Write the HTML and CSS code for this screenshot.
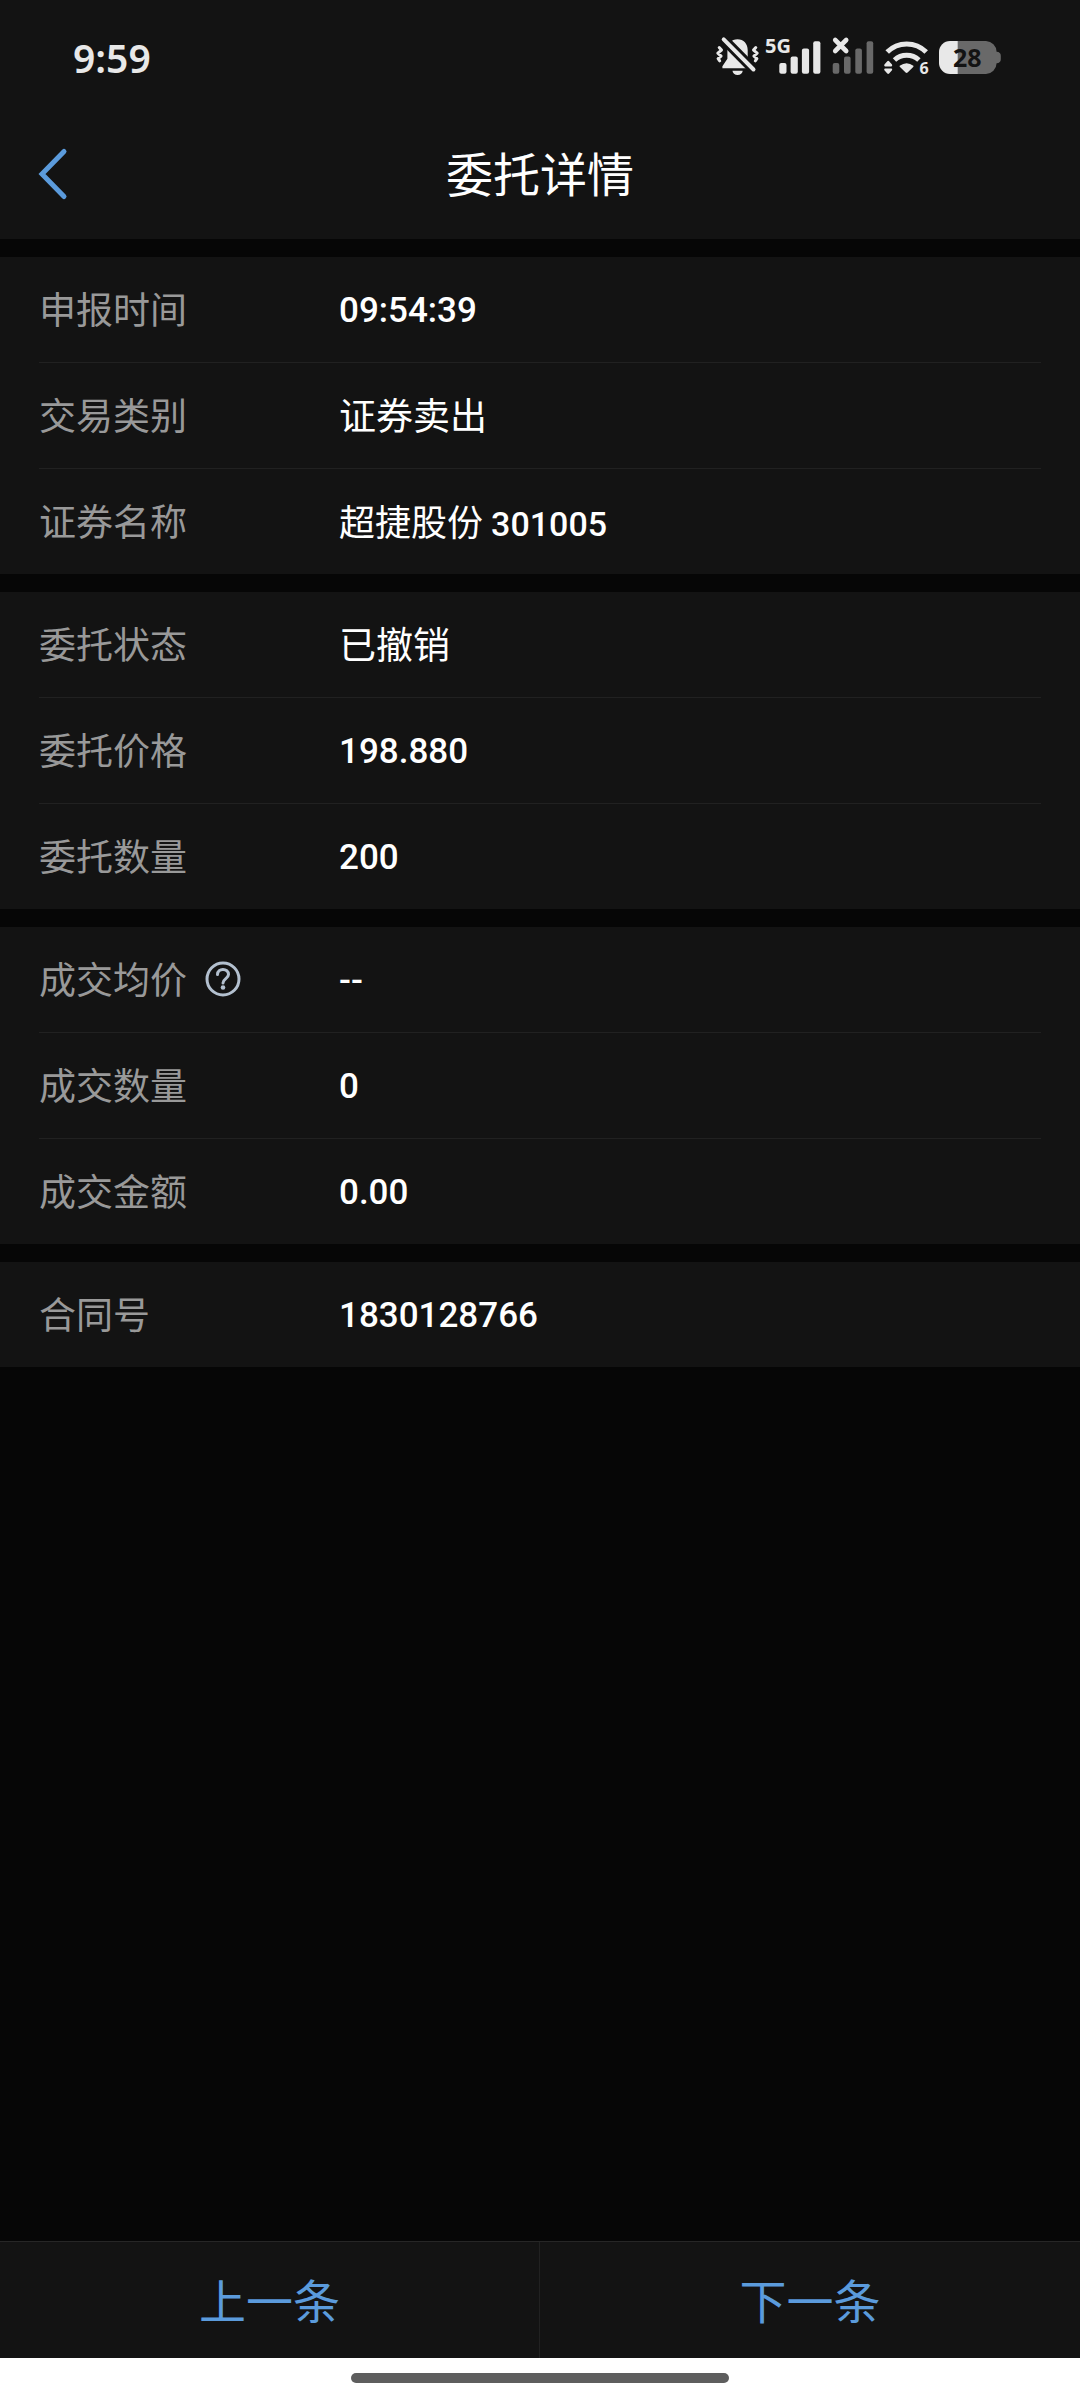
FILE: index.html
```html
<!DOCTYPE html>
<html lang="zh">
<head>
    <meta charset="UTF-8">
    <meta name="viewport" content="width=device-width, initial-scale=1.0">
    <title>委托详情</title>
    <link rel="stylesheet" href="styles.css">
</head>
<body>
    <!-- 状态栏 -->
    <div class="status-bar">
        <div class="status-time">9:59</div>
        <div class="status-icons">
            <svg width="48" height="40" viewBox="0 0 48 40">
                <path class="icon-fill" d="M23.5 3.3c6.2 0 10.2 4.7 10.2 10.7v7.5l4.3 7.5v3.3H8.4v-2l5-7.5V14c0-6 4-10.7 10.1-10.7zM18.5 34.7h10.2a5.1 4.2 0 0 1-10.2 0z"/>
                <path class="icon-gap" d="M6.7.3l35.3 35.7"/>
                <path class="icon-line" stroke-width="4" d="M9.7 3.3L39.5 33.5"/>
                <path class="icon-line" stroke-width="3" d="M5.2 11.5l2.3 2.6-3.7 3 3.3 3-3 2.5 1.6 2.2M41.8 11.5l-2.3 2.6 3.7 3-3.3 3 3 2.5-1.6 2.2"/>
            </svg>
            <svg width="66" height="40" viewBox="0 0 66 40">
                <text class="icon-text" x="1" y="17" font-size="20">5G</text>
                <g class="icon-fill">
                    <rect x="15.3" y="27" width="7.2" height="10.7" rx="2"/>
                    <rect x="26.6" y="20.6" width="7.2" height="17.1" rx="2"/>
                    <rect x="37.9" y="12.6" width="7.2" height="25.1" rx="2"/>
                    <rect x="49.2" y="5.3" width="7.2" height="32.4" rx="2"/>
                </g>
            </svg>
            <svg width="50" height="40" viewBox="0 0 50 40">
                <path class="icon-line" stroke-width="4.6" d="M3.2 4l11 11M14.2 4l-11 11"/>
                <g class="icon-dim">
                    <rect x=".7" y="27" width="6.6" height="10.7" rx="2"/>
                    <rect x="12" y="20.6" width="6.6" height="17.1" rx="2"/>
                    <rect x="23.3" y="12.6" width="6.6" height="25.1" rx="2"/>
                    <rect x="34.6" y="5.3" width="6.6" height="32.4" rx="2"/>
                </g>
            </svg>
            <svg width="53" height="40" viewBox="0 0 53 40">
                <path class="wifi-arc" d="M3.2 16a27.5 27.5 0 0 1 39 0"/>
                <path class="wifi-arc" d="M10.5 24a18 18 0 0 1 24.4 0"/>
                <path class="icon-fill" d="M15.7 29.7q7-5 13.7 0 .4.6-.2 1.3l-5.6 5.6q-1 .8-2 0l-5.6-5.6q-.8-.7-.3-1.3z"/>
                <path class="icon-fill" d="M3.3 25.2q.9-.9 1.8 0L8 28.6q.7 1.6-.6 1.8H1q-1.3-.2-.6-1.8zM3.3 37.6q.9.9 1.8 0L8 34.2q.7-1.6-.6-1.8H1q-1.3.2-.6 1.8z"/>
                <text class="icon-text" x="35.5" y="38" font-size="16">6</text>
            </svg>
            <svg width="62" height="40" viewBox="0 0 62 40">
                <path class="icon-dim" d="M11 5h36a11 11 0 0 1 10.6 10.7q4.2.3 4.2 4v3.6q0 3.7-4.2 4A11 11 0 0 1 47 38H11z"/>
                <path class="icon-fill" d="M18.7 5H11A11 11 0 0 0 0 16v11a11 11 0 0 0 11 11h7.7z"/>
                <text class="battery-text" x="14" y="31" font-size="25">28</text>
            </svg>
        </div>
    </div>

    <!-- 导航栏 -->
    <header class="nav-bar">
        <button class="nav-back" type="button" aria-label="返回">
            <svg width="28" height="50" viewBox="0 0 28 50"><path d="M25 2.5L3 25l22 22.5"/></svg>
        </button>
        <h1 class="nav-title">委托详情</h1>
    </header>

    <!-- 委托信息 -->
    <main class="detail">
        <dl class="group">
            <div class="row"><dt>申报时间</dt><dd class="num">09:54:39</dd></div>
            <div class="row"><dt>交易类别</dt><dd>证券卖出</dd></div>
            <div class="row"><dt>证券名称</dt><dd class="stock">超捷股份 <span class="stock-code">301005</span></dd></div>
        </dl>
        <dl class="group">
            <div class="row"><dt>委托状态</dt><dd>已撤销</dd></div>
            <div class="row"><dt>委托价格</dt><dd class="num">198.880</dd></div>
            <div class="row"><dt>委托数量</dt><dd class="num">200</dd></div>
        </dl>
        <dl class="group">
            <div class="row">
                <dt>成交均价
                    <button class="help" type="button" aria-label="说明">
                        <svg width="36" height="36" viewBox="0 0 36 36">
                            <circle cx="18" cy="18" r="16"/>
                            <path d="M12.5 13.5c0-7 11-6.5 11 0 0 4-5.5 4.3-5.5 8.5"/>
                            <circle class="help-dot" cx="18" cy="26.5" r="2.3"/>
                        </svg>
                    </button>
                </dt>
                <dd class="num">--</dd>
            </div>
            <div class="row"><dt>成交数量</dt><dd class="num">0</dd></div>
            <div class="row"><dt>成交金额</dt><dd class="num">0.00</dd></div>
        </dl>
        <dl class="group">
            <div class="row"><dt>合同号</dt><dd class="num">1830128766</dd></div>
        </dl>
    </main>

    <!-- 底部按钮 -->
    <footer class="pager">
        <button type="button">上一条</button>
        <button type="button">下一条</button>
    </footer>
    <div class="home-bar"><div class="home-pill"></div></div>
</body>
</html>
```
FILE: styles.css
```css
* {
    box-sizing: border-box;
}
body {
    margin: 0;
    min-height: 100vh;
    display: flex;
    flex-direction: column;
    background-color: #060606;
    color: #fff;
    font-family: "Noto Sans CJK SC", sans-serif;
}
button {
    padding: 0;
    border: none;
    background: none;
    color: #5b9bdc;
    font-family: inherit;
    cursor: pointer;
}
svg {
    display: block;
    overflow: visible;
}

/* 状态栏 */
.status-bar {
    display: flex;
    justify-content: space-between;
    align-items: center;
    height: 112px;
    padding: 0 79px 0 73px;
    background-color: #131313;
}
.status-time {
    padding-top: 2px;
    color: #e8e8e8;
    font-family: "Noto Sans", sans-serif;
    font-size: 39px;
    font-weight: 600;
}
.status-icons {
    display: flex;
    gap: 2px;
}
.icon-fill {
    fill: #e8e8e8;
}
.icon-dim {
    fill: #696969;
}
.icon-line {
    fill: none;
    stroke: #e8e8e8;
    stroke-linecap: round;
    stroke-linejoin: round;
}
.icon-gap {
    fill: none;
    stroke: #131313;
    stroke-width: 10;
}
.wifi-arc {
    fill: none;
    stroke: #e8e8e8;
    stroke-width: 5;
}
.icon-text {
    fill: #e8e8e8;
    font-family: "Noto Sans", sans-serif;
    font-weight: 700;
}
.battery-text {
    fill: #131313;
    font-family: "Noto Sans", sans-serif;
    font-weight: 700;
}

/* 导航栏 */
.nav-bar {
    display: grid;
    grid-template-columns: 1fr auto 1fr;
    align-items: center;
    height: 127px;
    padding: 0 39px 4px;
    background-color: #131313;
}
.nav-back {
    justify-self: start;
}
.nav-back path {
    fill: none;
    stroke: #5b9bdc;
    stroke-width: 5;
    stroke-linecap: round;
}
.nav-title {
    margin: 0;
    padding-bottom: 4px;
    font-size: 47px;
    font-weight: 400;
    line-height: 60px;
}

/* 列表 */
.detail {
    flex: 1;
    padding-top: 18px;
}
.group {
    margin: 0 0 18px;
    padding: 0 39px;
    background-color: #131313;
}
.row {
    display: flex;
    padding: 25px 0 27px;
    font-size: 37px;
    line-height: 53px;
}
.row + .row {
    border-top: 1px solid #212121;
}
.row dt {
    display: flex;
    align-items: center;
    gap: 18px;
    width: 300px;
    color: #999;
}
.row dd {
    margin: 0;
}
.row .num {
    padding-top: 4px;
    font-family: Roboto, sans-serif;
    font-size: 35px;
    font-weight: 500;
    line-height: 49px;
}
.row .stock {
    font-size: 36px;
}
.stock-code {
    font-family: Roboto, sans-serif;
    font-size: 34px;
    font-weight: 500;
    line-height: 1;
}
.help svg {
    fill: none;
    stroke: #b3c0cf;
    stroke-width: 3;
    stroke-linecap: round;
}
.help .help-dot {
    fill: #b3c0cf;
    stroke: none;
}

/* 底部 */
.pager {
    display: flex;
    border-top: 1px solid #262626;
    background-color: #131313;
}
.pager button {
    width: 50%;
    padding: 27px 0 29px;
    font-size: 47px;
    line-height: 60px;
}
.pager button:first-child {
    border-right: 1px solid #212121;
}
.home-bar {
    display: flex;
    justify-content: center;
    align-items: center;
    height: 42px;
    padding-bottom: 2px;
    background-color: #fff;
}
.home-pill {
    width: 35%;
    height: 10px;
    border-radius: 5px;
    background-color: #5e5e5e;
}
```
